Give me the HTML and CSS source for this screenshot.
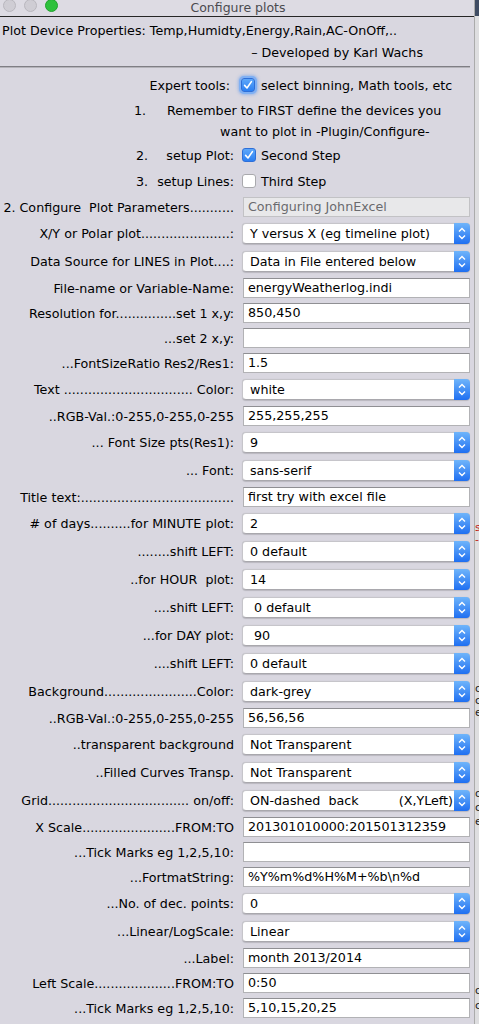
FILE: index.html
```html
<!DOCTYPE html>
<html>
<head>
<meta charset="utf-8">
<link rel="stylesheet" href="styles.css">
</head>
<body>
<div class="screen">
  <div class="window">
    <div class="titlebar">
      <div class="lights"><span class="light grey"></span><span class="light grey"></span><span class="light green"></span></div>
      <div class="title">Configure plots</div>
    </div>

    <div class="intro">
      <div class="intro-line">Plot Device Properties: Temp,Humidty,Energy,Rain,AC-OnOff,..</div>
      <div class="intro-line credit">– Developed by Karl Wachs</div>
    </div>
    <div class="sep"></div>

    <div class="steps">
      <div class="srow expert">
        <div class="slabel">Expert tools:</div>
        <div class="sctrl"><span class="cb on focus"><svg viewBox="0 0 14 14" width="14" height="14"><path d="M3.6 7.4 L6 10 L10.4 3.6" fill="none" stroke="#fff" stroke-width="1.6" stroke-linecap="round" stroke-linejoin="round"/></svg></span><span class="cbtext">select binning, Math tools, etc</span></div>
      </div>
      <div class="srow note1">
        <span class="num">1.</span><span class="notetext">Remember to FIRST define the devices you</span>
      </div>
      <div class="srow note2">want to plot in -Plugin/Configure-</div>
      <div class="srow step2">
        <div class="slabel"><span class="snum">2.</span><span class="stxt">setup Plot:</span></div>
        <div class="sctrl"><span class="cb on"><svg viewBox="0 0 14 14" width="14" height="14"><path d="M3.6 7.4 L6 10 L10.4 3.6" fill="none" stroke="#fff" stroke-width="1.6" stroke-linecap="round" stroke-linejoin="round"/></svg></span><span class="cbtext">Second Step</span></div>
      </div>
      <div class="srow step3">
        <div class="slabel"><span class="snum">3.</span><span class="stxt">setup Lines:</span></div>
        <div class="sctrl"><span class="cb"></span><span class="cbtext">Third Step</span></div>
      </div>
    </div>

    <div class="form">
      <div class="row fld"><div class="label">2. Configure  Plot Parameters...........</div><div class="field disabled">Configuring JohnExcel</div></div>
      <div class="row pop"><div class="label">X/Y or Polar plot......................:</div><div class="popup"><span class="ptext">Y versus X (eg timeline plot)</span><span class="arrow"></span></div></div>
      <div class="row pop"><div class="label">Data Source for LINES in Plot....:</div><div class="popup"><span class="ptext">Data in File entered below</span><span class="arrow"></span></div></div>
      <div class="row fld"><div class="label">File-name or Variable-Name:</div><div class="field">energyWeatherlog.indi</div></div>
      <div class="row fld"><div class="label">Resolution for...............set 1 x,y:</div><div class="field">850,450</div></div>
      <div class="row fld"><div class="label">...set 2 x,y:</div><div class="field"></div></div>
      <div class="row fld"><div class="label">...FontSizeRatio Res2/Res1:</div><div class="field">1.5</div></div>
      <div class="row pop"><div class="label">Text ................................ Color:</div><div class="popup"><span class="ptext">white</span><span class="arrow"></span></div></div>
      <div class="row fld"><div class="label">..RGB-Val.:0-255,0-255,0-255</div><div class="field">255,255,255</div></div>
      <div class="row pop"><div class="label">... Font Size pts(Res1):</div><div class="popup"><span class="ptext">9</span><span class="arrow"></span></div></div>
      <div class="row pop"><div class="label">... Font:</div><div class="popup"><span class="ptext">sans-serif</span><span class="arrow"></span></div></div>
      <div class="row fld"><div class="label">Title text:......................................</div><div class="field">first try with excel file</div></div>
      <div class="row pop"><div class="label"># of days..........for MINUTE plot:</div><div class="popup"><span class="ptext">2</span><span class="arrow"></span></div></div>
      <div class="row pop"><div class="label">........shift LEFT:</div><div class="popup"><span class="ptext">0 default</span><span class="arrow"></span></div></div>
      <div class="row pop"><div class="label">..for HOUR  plot:</div><div class="popup"><span class="ptext">14</span><span class="arrow"></span></div></div>
      <div class="row pop"><div class="label">....shift LEFT:</div><div class="popup"><span class="ptext"> 0 default</span><span class="arrow"></span></div></div>
      <div class="row pop"><div class="label">...for DAY plot:</div><div class="popup"><span class="ptext"> 90</span><span class="arrow"></span></div></div>
      <div class="row pop"><div class="label">....shift LEFT:</div><div class="popup"><span class="ptext">0 default</span><span class="arrow"></span></div></div>
      <div class="row pop"><div class="label">Background.......................Color:</div><div class="popup"><span class="ptext">dark-grey</span><span class="arrow"></span></div></div>
      <div class="row fld"><div class="label">..RGB-Val.:0-255,0-255,0-255</div><div class="field">56,56,56</div></div>
      <div class="row pop"><div class="label">..transparent background</div><div class="popup"><span class="ptext">Not Transparent</span><span class="arrow"></span></div></div>
      <div class="row pop"><div class="label">..Filled Curves Transp.</div><div class="popup"><span class="ptext">Not Transparent</span><span class="arrow"></span></div></div>
      <div class="row pop"><div class="label">Grid................................... on/off:</div><div class="popup"><span class="ptext split"><span>ON-dashed  back</span><span>(X,YLeft)</span></span><span class="arrow"></span></div></div>
      <div class="row fld"><div class="label">X Scale.......................FROM:TO</div><div class="field">201301010000:201501312359</div></div>
      <div class="row fld"><div class="label">...Tick Marks eg 1,2,5,10:</div><div class="field"></div></div>
      <div class="row fld"><div class="label">...FortmatString:</div><div class="field">%Y%m%d%H%M+%b\n%d</div></div>
      <div class="row pop"><div class="label">...No. of dec. points:</div><div class="popup"><span class="ptext">0</span><span class="arrow"></span></div></div>
      <div class="row pop"><div class="label">...Linear/LogScale:</div><div class="popup"><span class="ptext">Linear</span><span class="arrow"></span></div></div>
      <div class="row fld"><div class="label">...Label:</div><div class="field">month 2013/2014</div></div>
      <div class="row fld"><div class="label">Left Scale....................FROM:TO</div><div class="field">0:50</div></div>
      <div class="row fld"><div class="label">...Tick Marks eg 1,2,5,10:</div><div class="field">5,10,15,20,25</div></div>
    </div>
  </div>
  <div class="side">
    <div class="side-top"></div>
    <div class="frag red f1">s</div>
    <div class="frag red f2">-</div>
    <div class="frag f3">o</div>
    <div class="frag f4">c</div>
    <div class="frag f5">e</div>
    <div class="frag f6">o</div>
    <div class="frag f7">c</div>
    <div class="frag f8">e</div>
    <div class="frag f9">o</div>
    <div class="frag f10">c</div>
  </div>
</div>
</body>
</html>
```

FILE: styles.css
```css
html, body {
  margin: 0;
  padding: 0;
}
body {
  background: #d9d7e0;
  font-family: "DejaVu Sans", "Liberation Sans", sans-serif;
  font-size: 12.7px;
  color: #000;
}
.screen {
  display: flex;
  width: 479px;
  height: 1024px;
  overflow: hidden;
}
.window {
  width: 474px;
  flex: none;
  background: #d9d7e0;
}
.titlebar {
  position: relative;
  height: 16px;
  border-bottom: 1px solid #262626;
  background: #dddbe3;
}
.lights {
  position: absolute;
  left: 3px;
  top: -1px;
  display: flex;
  gap: 8px;
}
.light {
  width: 11px;
  height: 11px;
  border-radius: 50%;
  display: block;
}
.light.grey {
  background: #cfcdd4;
  border: 1px solid #b9b7be;
}
.light.green {
  background: #2ec13c;
  border: 1px solid #22a22e;
}
.title {
  text-align: center;
  line-height: 13px;
  padding-top: 1px;
  font-size: 12.5px;
  color: #4a4a4f;
  padding-left: 2px;
}
.intro {
  padding-left: 2px;
  padding-top: 3px;
}
.intro-line {
  line-height: 22px;
  white-space: pre;
}
.credit {
  text-align: right;
  padding-right: 51px;
}
.sep {
  margin-top: 2px;
  width: 470px;
  height: 1px;
  background: #7f7e84;
  border-bottom: 1px solid #b4b3b9;
}
.steps {
  display: flex;
  flex-direction: column;
}
.srow {
  display: flex;
  align-items: center;
  height: 20px;
  white-space: pre;
}
.expert { margin-top: 7px; }
.note1 { margin-top: 5px; }
.note2 { margin-top: 1px; padding-left: 220px; }
.step2 { margin-top: 4px; }
.step3 { margin-top: 6px; }
.slabel {
  width: 230px;
  flex: none;
  display: flex;
  justify-content: flex-end;
}
.step2 .slabel, .step3 .slabel {
  width: 234px;
  justify-content: flex-start;
}
.snum {
  margin-left: 136px;
}
.stxt {
  flex: 1;
  text-align: right;
}
.sctrl {
  display: flex;
  align-items: center;
  margin-left: 11px;
}
.step2 .sctrl, .step3 .sctrl {
  margin-left: 8px;
}
.num {
  margin-left: 134px;
  width: 33px;
}
.cb {
  width: 14px;
  height: 14px;
  box-sizing: border-box;
  border-radius: 3px;
  border: 1px solid #a9a9ad;
  background: #fff;
  display: block;
  flex: none;
}
.cb svg { display: block; margin: -1px; }
.cb.on {
  background: linear-gradient(#5ea8fa, #2b7ff2);
  border: 1px solid #2e6fd8;
}
.cb.focus {
  box-shadow: 0 0 0 2px #7fb0f4, 0 0 3px 3px rgba(90,150,240,0.5);
}
.cbtext {
  margin-left: 5px;
}
.expert .cbtext { margin-left: 6px; }

.form {
  display: flex;
  flex-direction: column;
  gap: 5px;
  margin-top: 6px;
}
.row {
  display: flex;
  align-items: center;
}
.row.fld { height: 20px; }
.row.pop { height: 21px; margin: 1px 0; }
.label {
  width: 234px;
  flex: none;
  text-align: right;
  white-space: pre;
}
.field {
  margin-left: 9px;
  width: 227px;
  height: 20px;
  box-sizing: border-box;
  background: #fff;
  border: 1px solid #b2b2b5;
  border-top-color: #8f8f93;
  padding-left: 4px;
  line-height: 18px;
  white-space: pre;
}
.field.disabled {
  background: #e8e8ea;
  color: #6a6a6e;
  border-color: #c2c2c5;
}
.popup {
  margin-left: 8px;
  width: 228px;
  height: 21px;
  box-sizing: border-box;
  background: #fff;
  border-radius: 4px;
  border: 1px solid #c6c5ca;
  border-bottom-color: #a9a8ad;
  box-shadow: 0 0.5px 1px rgba(0,0,0,0.15);
  display: flex;
  align-items: stretch;
}
.ptext {
  flex: 1;
  padding-left: 7px;
  line-height: 19px;
  white-space: pre;
}
.ptext.split {
  display: flex;
  justify-content: space-between;
  padding-right: 1px;
}
.arrow {
  width: 16px;
  flex: none;
  margin: -1px -1px -1px 0;
  border-radius: 0 4px 4px 0;
  background:
    url("data:image/svg+xml,%3Csvg xmlns='http://www.w3.org/2000/svg' width='16' height='21'%3E%3Cpath d='M5 8.6 L8 5.6 L11 8.6 M5 12.6 L8 15.6 L11 12.6' fill='none' stroke='white' stroke-width='1.4'/%3E%3C/svg%3E") center / 16px 21px no-repeat,
    linear-gradient(#6fb5fb, #1f6ff1);
}
.side {
  flex: 1;
  position: relative;
  background: #dedee0;
  border-left: 1px solid #ababab;
}
.side-top {
  height: 16px;
  background: #3f4c63;
}
.frag {
  position: absolute;
  left: 0;
  font-size: 11px;
  line-height: 11px;
  color: #222;
}
.red { color: #c0251c; }
.f1 { top: 522px; }
.f2 { top: 534px; }
.f3 { top: 683px; }
.f4 { top: 695px; }
.f5 { top: 707px; }
.f6 { top: 788px; }
.f7 { top: 802px; }
.f8 { top: 816px; }
.f9 { top: 985px; }
.f10 { top: 1000px; }
```
